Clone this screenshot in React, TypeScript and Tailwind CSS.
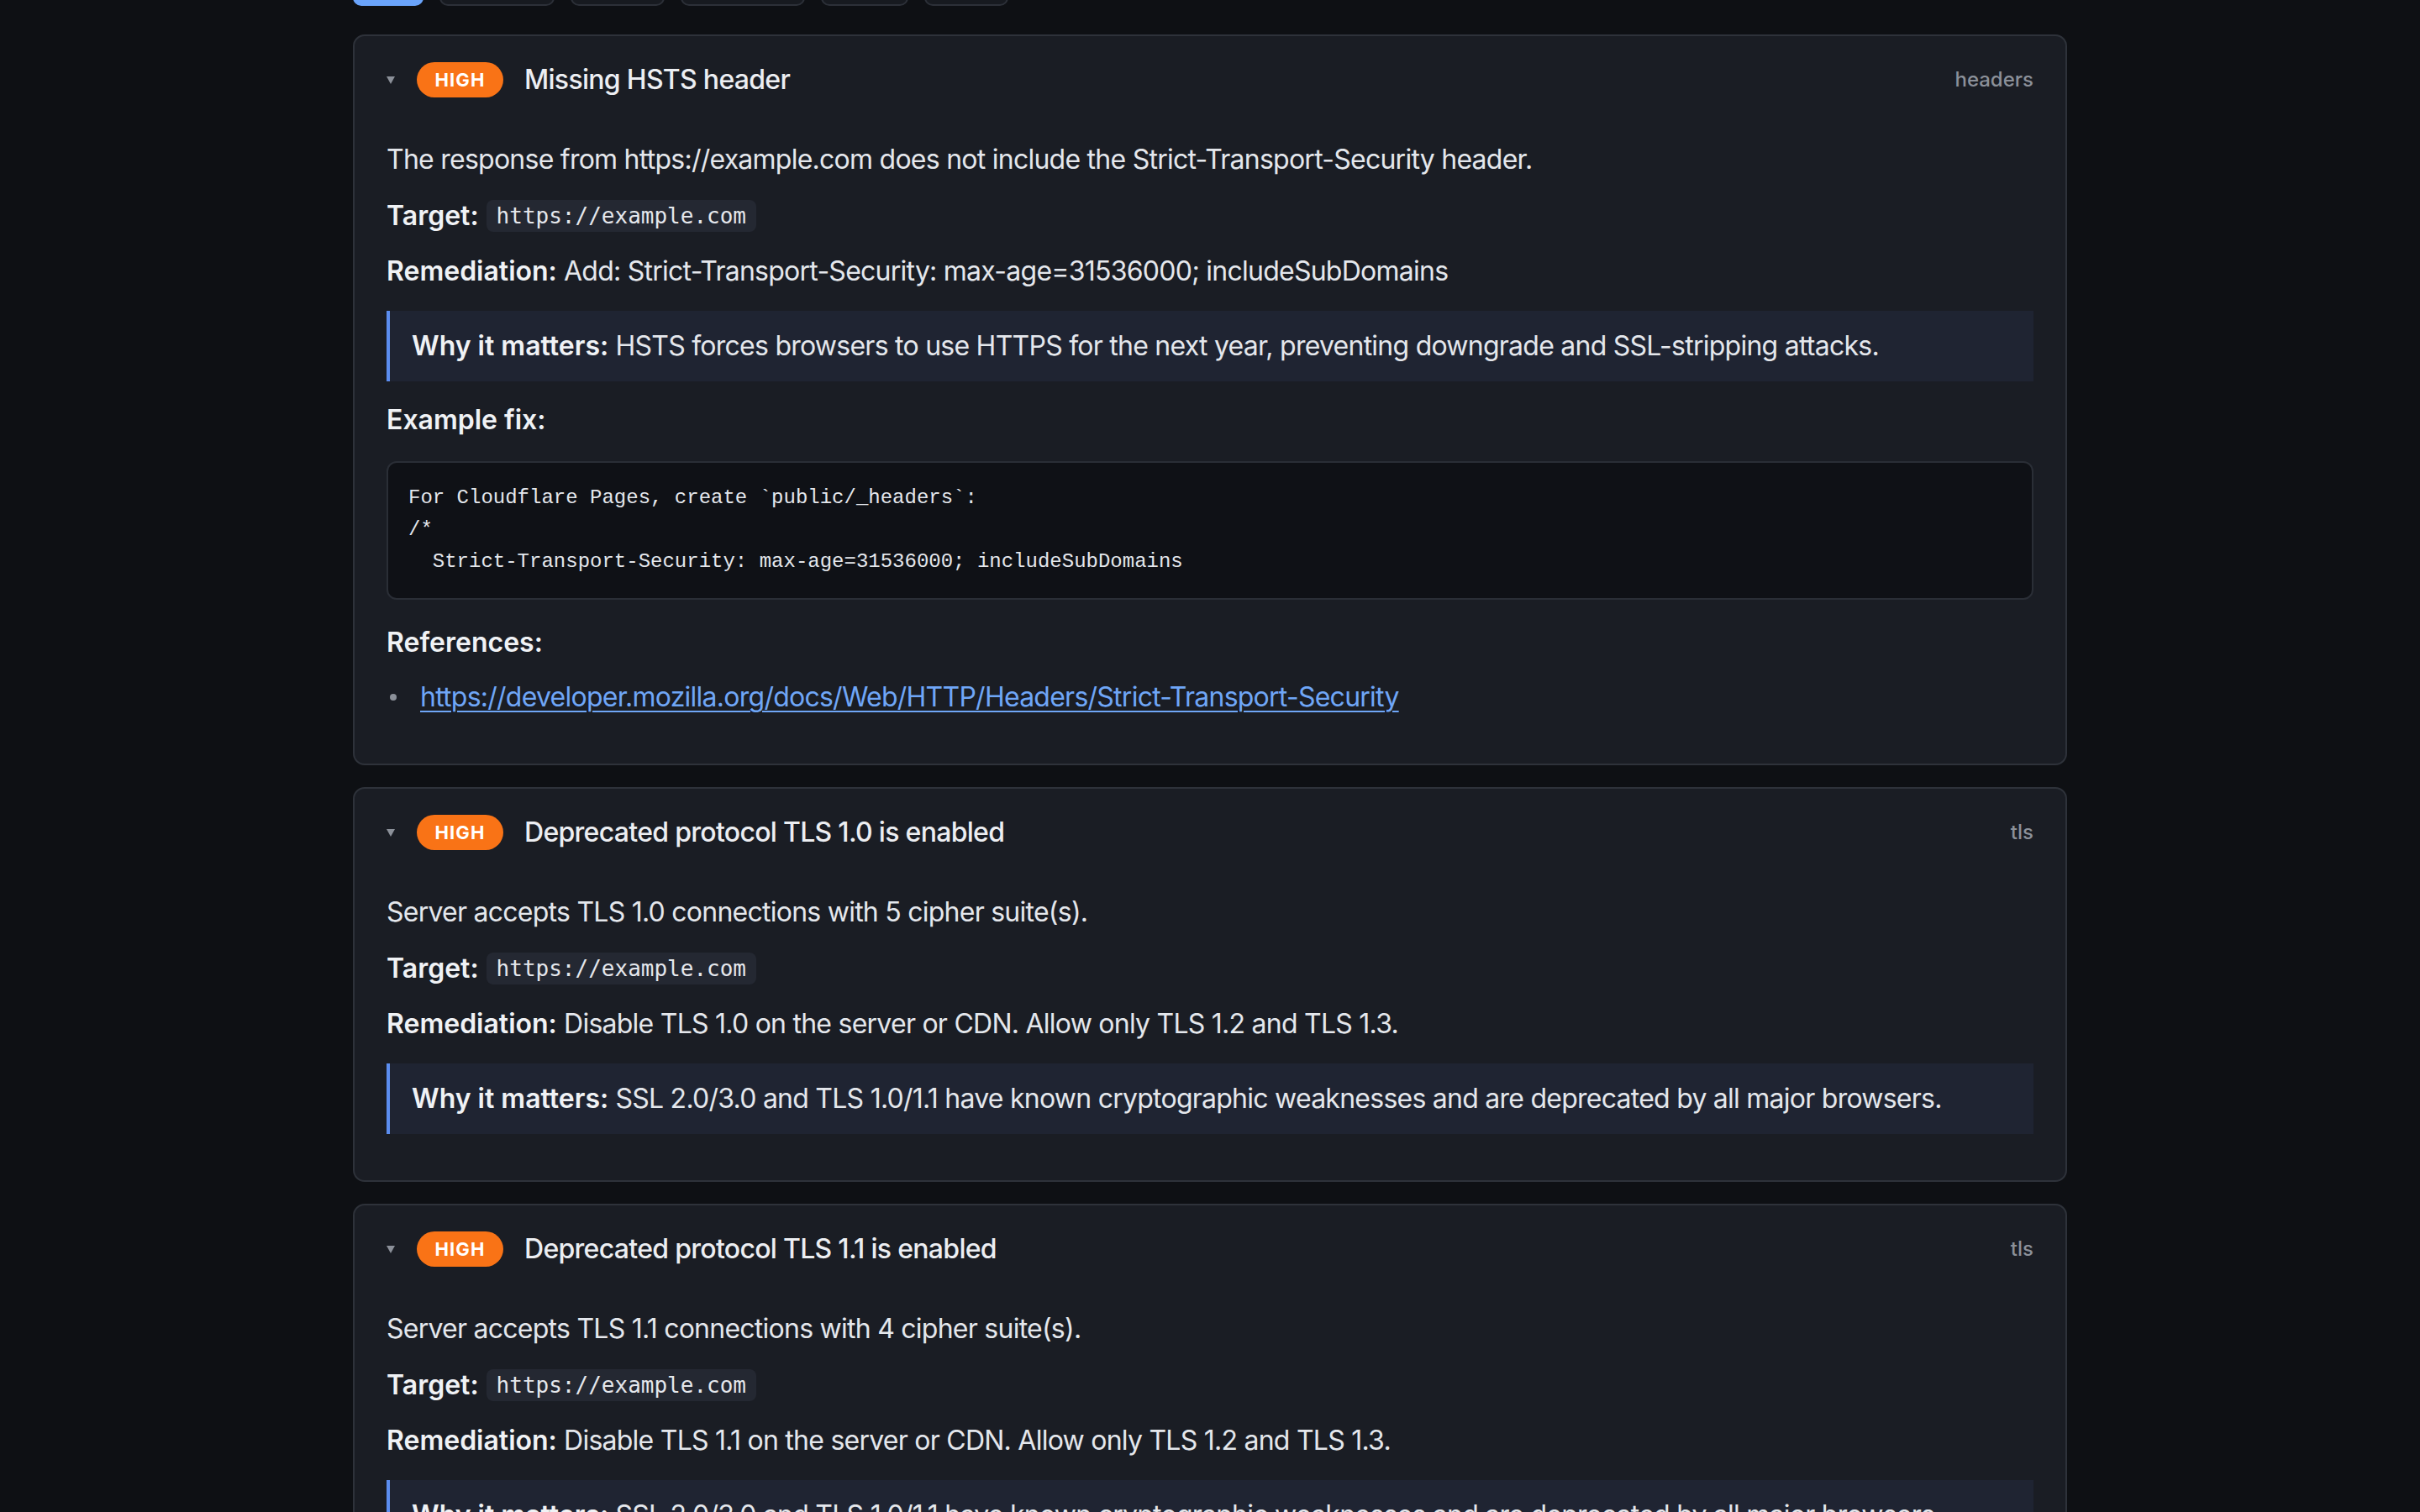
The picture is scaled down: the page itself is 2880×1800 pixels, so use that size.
import type { ReactNode } from "react";

type Finding = {
  title: string;
  category: string;
  description: string;
  target: string;
  remediation: string;
  why: string;
  example?: string;
  references?: string[];
};

const FINDINGS: Finding[] = [
  {
    title: "Missing HSTS header",
    category: "headers",
    description:
      "The response from https://example.com does not include the Strict-Transport-Security header.",
    target: "https://example.com",
    remediation:
      "Add: Strict-Transport-Security: max-age=31536000; includeSubDomains",
    why: "HSTS forces browsers to use HTTPS for the next year, preventing downgrade and SSL-stripping attacks.",
    example:
      "For Cloudflare Pages, create `public/_headers`:\n/*\n  Strict-Transport-Security: max-age=31536000; includeSubDomains",
    references: [
      "https://developer.mozilla.org/docs/Web/HTTP/Headers/Strict-Transport-Security",
    ],
  },
  {
    title: "Deprecated protocol TLS 1.0 is enabled",
    category: "tls",
    description: "Server accepts TLS 1.0 connections with 5 cipher suite(s).",
    target: "https://example.com",
    remediation:
      "Disable TLS 1.0 on the server or CDN. Allow only TLS 1.2 and TLS 1.3.",
    why: "SSL 2.0/3.0 and TLS 1.0/1.1 have known cryptographic weaknesses and are deprecated by all major browsers.",
  },
  {
    title: "Deprecated protocol TLS 1.1 is enabled",
    category: "tls",
    description: "Server accepts TLS 1.1 connections with 4 cipher suite(s).",
    target: "https://example.com",
    remediation:
      "Disable TLS 1.1 on the server or CDN. Allow only TLS 1.2 and TLS 1.3.",
    why: "SSL 2.0/3.0 and TLS 1.0/1.1 have known cryptographic weaknesses and are deprecated by all major browsers.",
  },
];

// severity filter chips above the list (scrolled mostly out of view)
const FILTERS = [
  { label: "All", width: "w-[84px]" },
  { label: "Critical", width: "w-[137px]" },
  { label: "High", width: "w-[112px]" },
  { label: "Medium", width: "w-[148px]" },
  { label: "Low", width: "w-[104px]" },
  { label: "Info", width: "w-[100px]" },
];

function Label({ children }: { children: ReactNode }) {
  return (
    <strong className="font-semibold tracking-normal text-[#f0f2f5]">
      {children}
    </strong>
  );
}

function FindingCard({ finding }: { finding: Finding }) {
  return (
    <details
      open
      className="rounded-[14px] border-2 border-[#2e323a] bg-[#1a1d24]"
    >
      <summary className="flex list-none items-center px-[38px] pt-[31px] [&::-webkit-details-marker]:hidden">
        <svg
          width="10"
          height="9"
          viewBox="0 0 10 9"
          className="mr-[26px] shrink-0"
        >
          <polygon points="0,0 10,0 5,9" fill="#8b9099" />
        </svg>
        <span className="mr-[25px] inline-flex h-[42px] w-[103px] items-center justify-center rounded-full bg-[#f97316] text-[22px] font-bold tracking-[0.05em] text-white">
          HIGH
        </span>
        <span className="text-[32px] font-medium leading-[42px] tracking-[-0.022em] text-[#eceef2]">
          {finding.title}
        </span>
        <span className="ml-auto text-[24px] font-medium tracking-normal text-[#8b9099]">
          {finding.category}
        </span>
      </summary>

      <div className="px-[38px] pb-[55px] pt-[50px] text-[32px] leading-[48px] tracking-[-0.75px] text-[#e4e7ec]">
        <p className="m-0">{finding.description}</p>
        <p className="m-0 mt-[19px] flex items-center">
          <Label>Target:</Label>
          <code className="ml-[9px] rounded-[8px] bg-[#242832] px-[12px] py-[2px] font-['DejaVu_Sans_Mono',monospace] text-[26px] leading-[34px] tracking-normal text-[#e4e7ec]">
            {finding.target}
          </code>
        </p>
        <p className="m-0 mt-[18px]">
          <Label>Remediation:</Label> {finding.remediation}
        </p>
        <div className="mt-[23px] border-l-4 border-[#5b8def] bg-[#1f2432] py-[18px] pl-[26px] pr-[24px]">
          <Label>Why it matters:</Label> {finding.why}
        </div>

        {finding.example && (
          <>
            <p className="m-0 mt-[22px]">
              <Label>Example fix:</Label>
            </p>
            <pre className="m-0 mt-[25px] whitespace-pre rounded-[12px] border-2 border-[#2a2e36] bg-[#0f1116] px-[24px] pb-[24px] pt-[23px] font-['Liberation_Mono','Courier_New',monospace] text-[24px] leading-[38px] tracking-normal text-[#e4e7ec]">
              {finding.example}
            </pre>
          </>
        )}

        {finding.references && (
          <>
            <p className="m-0 mt-[27px]">
              <Label>References:</Label>
            </p>
            <ul className="m-0 mt-[17px] list-none p-0">
              {finding.references.map((ref) => (
                <li key={ref} className="flex items-center">
                  <span className="ml-[4px] mr-[28px] h-[8px] w-[8px] shrink-0 rounded-full bg-[#8b9099]" />
                  <a
                    href={ref}
                    className="text-[#6fa6f7] underline decoration-[2px] underline-offset-[5px]"
                  >
                    {ref}
                  </a>
                </li>
              ))}
            </ul>
          </>
        )}
      </div>
    </details>
  );
}

export default function App() {
  return (
    <div className="h-[1800px] overflow-hidden bg-[#0e1014] font-['Inter','Noto_Sans',sans-serif] antialiased">
      <div className="mx-auto w-[2040px]">
        <div className="-mt-[45px] flex gap-[19px]">
          {FILTERS.map((f, i) => (
            <button
              key={f.label}
              aria-label={f.label}
              className={`h-[52px] rounded-[10px] border-2 ${f.width} ${
                i === 0
                  ? "border-[#6aa4fb] bg-[#6aa4fb]"
                  : "border-[#2c3038] bg-[#171a20]"
              }`}
            />
          ))}
        </div>

        <div className="mt-[34px] flex flex-col gap-[26px]">
          {FINDINGS.map((finding) => (
            <FindingCard key={finding.title} finding={finding} />
          ))}
        </div>
      </div>
    </div>
  );
}
